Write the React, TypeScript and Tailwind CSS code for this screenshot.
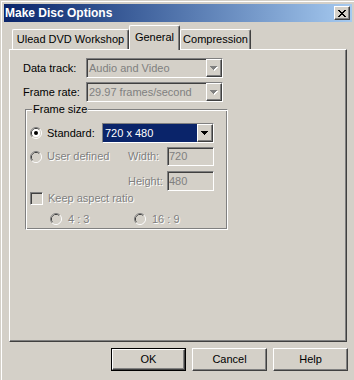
import React from 'react';

const raised =
  'border border-t-white border-l-white border-r-[#404040] border-b-[#404040] shadow-[inset_-1px_-1px_0_#808080]';
const sunken =
  'border border-t-[#808080] border-l-[#808080] border-r-white border-b-white shadow-[inset_1px_1px_0_#404040,inset_-1px_-1px_0_#d4d0c8]';
const grayText = 'text-[#808080] [text-shadow:1px_1px_0_#fff]';

const Arrow = ({ disabled = false }: { disabled?: boolean }) => (
  <svg width="8" height="5" viewBox="0 0 8 5" shapeRendering="crispEdges">
    {disabled && <path d="M1 1h7v1H1zM2 2h5v1H2zM3 3h3v1H3zM4 4h1v1H4z" fill="#fff" />}
    <path d="M0 0h7v1H0zM1 1h5v1H1zM2 2h3v1H2zM3 3h1v1H3z" fill={disabled ? '#808080' : '#000'} />
  </svg>
);

const DropButton = ({ disabled = false }: { disabled?: boolean }) => (
  <div className={`w-[16px] h-full flex items-center justify-center bg-[#d4d0c8] ${raised}`}>
    <Arrow disabled={disabled} />
  </div>
);

const Radio = ({ checked = false, disabled = false }: { checked?: boolean; disabled?: boolean }) => (
  <svg width="12" height="12" viewBox="0 0 12 12" className="shrink-0">
    <path d="M2.1 9.9A5.5 5.5 0 0 1 9.9 2.1" stroke="#808080" fill="none" />
    <path d="M9.9 2.1A5.5 5.5 0 0 1 2.1 9.9" stroke="#fff" fill="none" />
    <path d="M2.82 9.18A4.5 4.5 0 0 1 9.18 2.82" stroke="#404040" fill="none" />
    <path d="M9.18 2.82A4.5 4.5 0 0 1 2.82 9.18" stroke="#d4d0c8" fill="none" />
    <circle cx="6" cy="6" r="4" fill={disabled ? '#d4d0c8' : '#fff'} />
    {checked && <circle cx="6" cy="6" r="2" fill="#000" />}
  </svg>
);

const Tab = ({ label, width, active = false }: { label: string; width: string; active?: boolean }) => (
  <div
    className={`${width} ${
      active ? 'h-[25px] -mb-px relative z-10 pb-[2px]' : 'h-[20px]'
    } flex items-center justify-center bg-[#d4d0c8] border-t border-l border-r border-t-white border-l-white border-r-[#404040] shadow-[inset_-1px_0_0_#808080] rounded-t-[2px]`}
  >
    {label}
  </div>
);

const DisabledCombo = ({ value }: { value: string }) => (
  <div className={`w-[137px] h-[20px] flex bg-[#d4d0c8] ${sunken}`}>
    <div className="flex-1 pl-[2px] flex items-center text-[#808080]">{value}</div>
    <DropButton disabled />
  </div>
);

const DisabledEdit = ({ value }: { value: string }) => (
  <div className={`w-[47px] h-full flex items-center pl-[1px] bg-[#d4d0c8] text-[#808080] ${sunken}`}>{value}</div>
);

const Button = ({ label, isDefault = false }: { label: string; isDefault?: boolean }) => (
  <div className={isDefault ? 'border border-black' : ''}>
    <div
      className={`${isDefault ? 'w-[73px] h-[21px]' : 'w-[75px] h-[23px]'} flex items-center justify-center bg-[#d4d0c8] ${raised}`}
    >
      {label}
    </div>
  </div>
);

export default function App() {
  return (
    <div className="w-[354px] h-[380px] overflow-hidden bg-[#d4d0c8] text-[11px] leading-[13px] text-black [font-family:'Liberation_Sans',Arial,sans-serif]">
      {/* window frame */}
      <div className="w-[356px] h-[392px] border border-t-[#d4d0c8] border-l-[#d4d0c8] border-r-[#404040] border-b-[#404040]">
        <div className="h-full border border-t-white border-l-white border-r-[#808080] border-b-[#808080] p-[2px] flex flex-col">
          {/* title bar */}
          <div className="h-[18px] shrink-0 flex items-center justify-between pl-[1px] pr-[2px] bg-gradient-to-r from-[#0a246a] to-[#a6caf0]">
            <span className="text-white font-bold text-[12px] leading-[14px]">Make Disc Options</span>
            <div className={`w-[16px] h-[14px] flex items-center justify-center bg-[#d4d0c8] ${raised}`}>
              <svg width="8" height="7" viewBox="0 0 8 7" shapeRendering="crispEdges" className="ml-[-1px]">
                <path
                  d="M0 0h2v1H0zM6 0h2v1H6zM1 1h2v1H1zM5 1h2v1H5zM2 2h4v1H2zM3 3h2v1H3zM2 4h4v1H2zM1 5h2v1H1zM5 5h2v1H5zM0 6h2v1H0zM6 6h2v1H6z"
                  fill="#000"
                />
              </svg>
            </div>
          </div>

          {/* tabs */}
          <div className="pt-[3px] pl-[8px] h-[27px] flex items-end">
            <Tab label="Ulead DVD Workshop" width="w-[117px]" />
            <Tab label="General" width="w-[51px]" active />
            <Tab label="Compression" width="w-[71px]" />
          </div>

          {/* tab panel */}
          <div className="ml-[5px] w-[338px] h-[293px] shrink-0 border border-t-white border-l-white border-r-[#404040] border-b-[#404040] shadow-[inset_-1px_-1px_0_#808080] pt-[8px] pl-[13px] flex flex-col">
            <div className="flex items-center h-[20px]">
              <span className="w-[63px]">Data track:</span>
              <DisabledCombo value="Audio and Video" />
            </div>
            <div className="flex items-center h-[20px] mt-[4px]">
              <span className="w-[63px]">Frame rate:</span>
              <DisabledCombo value="29.97 frames/second" />
            </div>

            <fieldset className="mt-[1px] ml-[2px] w-[203px] px-0 pl-[4px] pt-[7px] pb-[4px] border border-t-[#808080] border-l-[#808080] border-r-white border-b-white shadow-[inset_1px_1px_0_#fff,inset_-1px_-1px_0_#808080]">
              <legend className="ml-[2px] px-[1px] bg-[#d4d0c8] leading-[13px]">Frame size</legend>

              <div className="flex items-center h-[20px]">
                <Radio checked />
                <span className="ml-[5px] w-[55px]">Standard:</span>
                <div className={`w-[112px] h-[20px] flex bg-white ${sunken}`}>
                  <div className="flex-1 pl-[2px] flex items-center bg-[#0a246a] text-white">720 x 480</div>
                  <DropButton />
                </div>
              </div>

              <div className="flex items-center h-[19px] mt-[4px]">
                <Radio disabled />
                <span className={`ml-[5px] w-[81px] ${grayText}`}>User defined</span>
                <span className={`w-[39px] ${grayText}`}>Width:</span>
                <DisabledEdit value="720" />
              </div>

              <div className="flex items-center h-[20px] mt-[5px]">
                <span className={`ml-[98px] w-[39px] ${grayText}`}>Height:</span>
                <DisabledEdit value="480" />
              </div>

              <div className="flex items-center h-[13px] mt-[1px]">
                <div className={`w-[13px] h-[13px] bg-[#d4d0c8] ${sunken}`} />
                <span className={`ml-[5px] ${grayText}`}>Keep aspect ratio</span>
              </div>

              <div className="flex items-center h-[12px] mt-[8px] pl-[20px]">
                <Radio disabled />
                <span className={`ml-[6px] w-[66px] ${grayText}`}>4 : 3</span>
                <Radio disabled />
                <span className={`ml-[6px] ${grayText}`}>16 : 9</span>
              </div>
            </fieldset>
          </div>

          {/* dialog buttons */}
          <div className="mt-[6px] pr-[4px] flex justify-end gap-[6px]">
            <Button label="OK" isDefault />
            <Button label="Cancel" />
            <Button label="Help" />
          </div>
        </div>
      </div>
    </div>
  );
}
